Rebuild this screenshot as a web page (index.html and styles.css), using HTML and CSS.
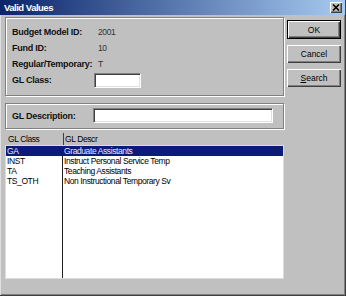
FILE: index.html
```html
<!DOCTYPE html>
<html lang="en">
<head>
    <meta charset="UTF-8">
    <title>Valid Values</title>
    <link rel="stylesheet" href="styles.css">
</head>
<body>

    <div class="window">
        <div class="titlebar">
            <span class="title">Valid Values</span>
            <span class="close-btn">
                <svg width="8" height="7" viewBox="0 0 8 7">
                    <path d="M1 0.5 L7 6.5 M7 0.5 L1 6.5" stroke="#000" stroke-width="1.6"/>
                </svg>
            </span>
        </div>

        <div class="dialog-body">
            <div class="main">
                <div class="group criteria">
                    <span class="label">Budget Model ID:</span>
                    <span class="value">2001</span>
                    <span class="label">Fund ID:</span>
                    <span class="value">10</span>
                    <span class="label">Regular/Temporary:</span>
                    <span class="value">T</span>
                    <span class="label">GL Class:</span>
                    <span><input type="text" class="field field-short"></span>
                </div>

                <div class="group search">
                    <span class="label search-label">GL Description:</span>
                    <input type="text" class="field field-long">
                </div>

                <div class="list-header">
                    <span class="head-class">GL Class</span>
                    <span class="head-descr">GL Descr</span>
                </div>

                <div class="list">
                    <div class="row selected">
                        <span class="cell-class">GA</span>
                        <span class="cell-descr">Graduate Assistants</span>
                    </div>
                    <div class="row">
                        <span class="cell-class">INST</span>
                        <span class="cell-descr">Instruct Personal Service Temp</span>
                    </div>
                    <div class="row">
                        <span class="cell-class">TA</span>
                        <span class="cell-descr">Teaching Assistants</span>
                    </div>
                    <div class="row">
                        <span class="cell-class">TS_OTH</span>
                        <span class="cell-descr">Non Instructional Temporary Sv</span>
                    </div>
                    <!-- resto vazio da lista, so para a linha da coluna -->
                    <div class="row filler">
                        <span class="cell-class"></span>
                        <span class="cell-descr"></span>
                    </div>
                </div>
            </div>

            <div class="buttons">
                <button class="btn default">OK</button>
                <button class="btn">Cancel</button>
                <button class="btn"><u>S</u>earch</button>
            </div>
        </div>
    </div>

</body>
</html>
```

FILE: styles.css
```css
* {
    box-sizing: border-box;
}
body {
    margin: 0;
    background-color: #c0c0c0;
    font-family: "Liberation Sans", Arial, sans-serif;
    font-size: 8.5px;
    letter-spacing: -0.4px;
    color: #000;
}
.window {
    width: 346px;
    height: 296px;
    display: flex;
    flex-direction: column;
    border-right: 1px solid #404040;
    border-bottom: 1px solid #404040;
}
.titlebar {
    height: 15px;
    display: flex;
    align-items: center;
    justify-content: space-between;
    padding: 0 3px 0 4px;
    background: linear-gradient(to right, #0a246a, #a6caf0);
}
.title {
    color: #fff;
    font-weight: bold;
    font-size: 9.5px;
    letter-spacing: -0.5px;
}
.close-btn {
    width: 12px;
    height: 11px;
    display: flex;
    align-items: center;
    justify-content: center;
    background-color: #c0c0c0;
    box-shadow: inset 1px 1px #fff, inset -1px -1px #404040, inset -2px -2px #808080;
}
.close-btn svg {
    display: block;
}
.dialog-body {
    flex: 1;
    display: flex;
    gap: 3px;
    padding: 2px 4px 0 4px;
    border-left: 1px solid #dfdfdf;
    box-shadow: inset -1px -1px #808080;
}
.main {
    width: 279px;
    display: flex;
    flex-direction: column;
}

/* caixas de grupo */
.group {
    border: 1px solid #808080;
    box-shadow: inset 1px 1px #fff, 1px 1px #fff;
}
.criteria {
    display: grid;
    grid-template-columns: 82px 1fr;
    grid-auto-rows: 16px;
    align-items: center;
    padding: 6px 6px 7px 6px;
}
.label {
    font-weight: bold;
    font-size: 9px;
    letter-spacing: -0.25px;
    color: #111;
    white-space: nowrap;
}
.value {
    padding-left: 4px;
    color: #333;
}
.criteria span {
    display: flex;
    align-items: center;
}
.search {
    margin-top: 7px;
    display: flex;
    align-items: center;
    padding: 4px 6px 5px 6px;
}
.search-label {
    width: 81px;
}
.field {
    display: block;
    height: 15px;
    margin: 0;
    padding: 0 2px;
    background-color: #fff;
    border: none;
    border-top: 1px solid #808080;
    border-left: 1px solid #808080;
    border-right: 1px solid #fff;
    border-bottom: 1px solid #fff;
    box-shadow: inset 1px 1px #404040, inset -1px -1px #dfdfdf;
    font: inherit;
    outline: none;
}
.field-short {
    width: 47px;
}
.field-long {
    width: 180px;
}

/* lista */
.list-header {
    margin-top: 4px;
    height: 12px;
    display: flex;
    line-height: 12px;
}
.head-class {
    width: 58px;
    padding-left: 3px;
}
.head-descr {
    border-left: 1px solid #404040;
    padding-left: 1px;
}
.list {
    height: 134px;
    display: flex;
    flex-direction: column;
    background-color: #fff;
    border: 1px solid #dcdcdc;
}
.row {
    height: 10px;
    line-height: 10px;
    display: flex;
    white-space: nowrap;
}
.cell-class {
    width: 57px;
    padding-left: 1px;
    border-right: 1px solid #202020;
}
.cell-descr {
    padding-left: 1px;
}
.selected {
    background-color: #0c1a7a;
    color: #e8e8ff;
}
.selected .cell-class {
    border-right-color: #0c1a7a;
}
.filler {
    flex: 1;
}

/* botoes */
.buttons {
    width: 54px;
    display: flex;
    flex-direction: column;
    gap: 6px;
    padding-top: 3px;
}
.btn {
    height: 18px;
    margin: 0;
    padding: 0;
    background-color: #c0c0c0;
    border: none;
    box-shadow: inset 1px 1px #fff, inset -1px -1px #404040, inset -2px -2px #808080;
    font: inherit;
    color: #000;
}
.btn.default {
    border: 1px solid #000;
    height: 19px;
}
```
